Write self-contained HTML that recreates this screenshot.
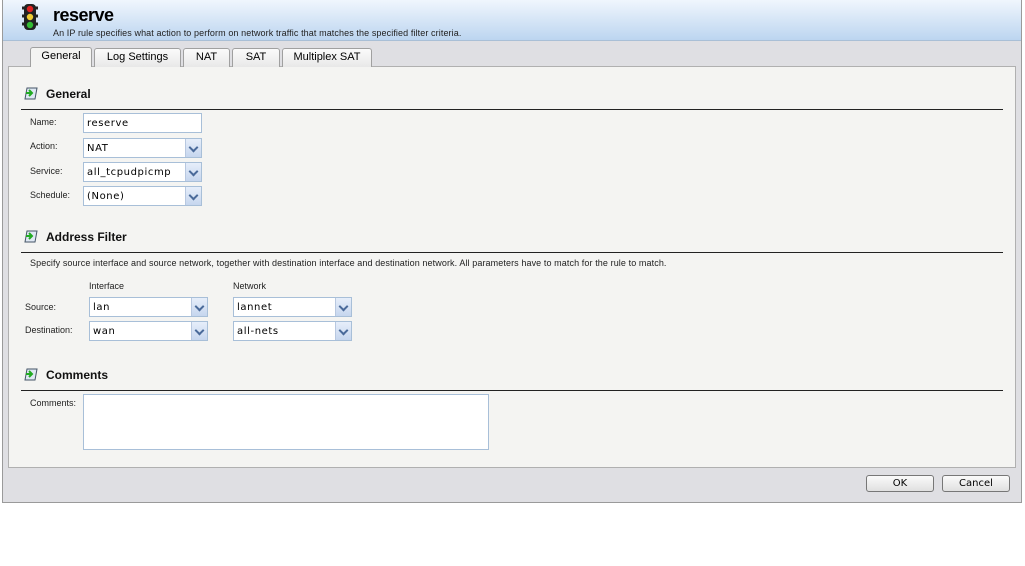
<!DOCTYPE html>
<html><head><style>
*{box-sizing:border-box;margin:0;padding:0}
body{width:1025px;height:566px;background:#fff;font-family:"Liberation Sans",Tahoma,sans-serif;position:relative;overflow:hidden}
.a{position:absolute}
.frame{left:2px;top:0;width:1020px;height:503px;background:#dfdfe3;border:1px solid #9a9a9a;border-top:none}
.hdr{left:3px;top:0;width:1018px;height:41px;background:linear-gradient(#f0f6fd,#bcd5f0);border-bottom:1px solid #a9bfd6}
.title{left:53px;top:5px;font-size:18px;font-weight:bold;color:#000;letter-spacing:-0.5px}
.sub{left:53px;top:28px;font-size:9px;color:#222;letter-spacing:0.1px}
.panel{left:8px;top:66px;width:1008px;height:402px;background:#f4f4f2;border:1px solid #b0b0b0}
.tab{top:48px;height:19px;border:1px solid #a0a0a0;border-bottom:none;background:linear-gradient(#fbfbfb,#e8e8e8);font-size:11px;text-align:center;line-height:17px;border-radius:3px 3px 0 0}
.tab.on{background:#f4f4f2;height:20px;top:47px;z-index:2}
.h{font-size:12px;font-weight:bold;color:#111}
.line{left:21px;width:982px;height:1px;background:#222}
.lbl{font-size:9px;color:#222}
.inp{height:20px;background:#fff;border:1px solid #a8bfd8;padding:4px 0 0 3px;letter-spacing:.6px;font-family:"DejaVu Sans","Liberation Sans",sans-serif;font-size:10px}
.dd{position:absolute;right:0;top:0;width:16px;height:18px;background:linear-gradient(#e6eefa,#c6d6ee);border-left:1px solid #b8c8e0}
.dd:after{content:"";position:absolute;left:4px;top:5px;width:5px;height:5px;border-right:2px solid #4a6a9a;border-bottom:2px solid #4a6a9a;transform:rotate(45deg)}
.btn{top:475px;height:17px;border:1px solid #777;border-radius:3px;background:linear-gradient(#fafafa,#e0e0e0);font-size:10px;text-align:center;line-height:15px;font-family:"DejaVu Sans",sans-serif}
.ic{width:15px;height:13px}
</style></head><body>
<div class="a frame"></div>
<div class="a hdr"></div>
<svg class="a" style="left:20px;top:2px" width="20" height="30" viewBox="0 0 20 30">
<rect x="4" y="2" width="12" height="26" rx="4" fill="#222"/>
<path d="M2 6h4M14 6h4M2 14h4M14 14h4M2 22h4M14 22h4" stroke="#222" stroke-width="3"/>
<circle cx="10" cy="7" r="3.2" fill="#d22"/><circle cx="10" cy="15" r="3.2" fill="#ec3"/><circle cx="10" cy="23" r="3.2" fill="#3b3"/>
</svg>
<div class="a title">reserve</div>
<div class="a sub">An IP rule specifies what action to perform on network traffic that matches the specified filter criteria.</div>
<div class="a panel"></div>
<div class="a tab on" style="left:30px;width:62px">General</div>
<div class="a tab" style="left:94px;width:87px">Log Settings</div>
<div class="a tab" style="left:183px;width:47px">NAT</div>
<div class="a tab" style="left:232px;width:48px">SAT</div>
<div class="a tab" style="left:282px;width:90px">Multiplex SAT</div>

<svg class="a ic" style="left:24px;top:87px" viewBox="0 0 15 13"><path d="M3 1h10l-2 11H1z" fill="#dfe8f4" stroke="#456" /><path d="M2 6h5M5 3l3 3-3 3" stroke="#2a2" stroke-width="2" fill="none"/></svg>
<div class="a h" style="left:46px;top:87px">General</div>
<div class="a line" style="top:109px"></div>
<div class="a lbl" style="left:30px;top:117px">Name:</div>
<div class="a inp" style="left:83px;top:113px;width:119px">reserve</div>
<div class="a lbl" style="left:30px;top:141px">Action:</div>
<div class="a inp" style="left:83px;top:138px;width:119px">NAT<span class="dd"></span></div>
<div class="a lbl" style="left:30px;top:166px">Service:</div>
<div class="a inp" style="left:83px;top:162px;width:119px">all_tcpudpicmp<span class="dd"></span></div>
<div class="a lbl" style="left:30px;top:190px">Schedule:</div>
<div class="a inp" style="left:83px;top:186px;width:119px">(None)<span class="dd"></span></div>

<svg class="a ic" style="left:24px;top:230px" viewBox="0 0 15 13"><path d="M3 1h10l-2 11H1z" fill="#dfe8f4" stroke="#456" /><path d="M2 6h5M5 3l3 3-3 3" stroke="#2a2" stroke-width="2" fill="none"/></svg>
<div class="a h" style="left:46px;top:230px">Address Filter</div>
<div class="a line" style="top:252px"></div>
<div class="a lbl" style="left:30px;top:258px;letter-spacing:0.1px">Specify source interface and source network, together with destination interface and destination network. All parameters have to match for the rule to match.</div>
<div class="a lbl" style="left:89px;top:281px">Interface</div>
<div class="a lbl" style="left:233px;top:281px">Network</div>
<div class="a lbl" style="left:25px;top:302px">Source:</div>
<div class="a inp" style="left:89px;top:297px;width:119px">lan<span class="dd"></span></div>
<div class="a inp" style="left:233px;top:297px;width:119px">lannet<span class="dd"></span></div>
<div class="a lbl" style="left:25px;top:325px">Destination:</div>
<div class="a inp" style="left:89px;top:321px;width:119px">wan<span class="dd"></span></div>
<div class="a inp" style="left:233px;top:321px;width:119px">all-nets<span class="dd"></span></div>

<svg class="a ic" style="left:24px;top:368px" viewBox="0 0 15 13"><path d="M3 1h10l-2 11H1z" fill="#dfe8f4" stroke="#456" /><path d="M2 6h5M5 3l3 3-3 3" stroke="#2a2" stroke-width="2" fill="none"/></svg>
<div class="a h" style="left:46px;top:368px">Comments</div>
<div class="a line" style="top:390px"></div>
<div class="a lbl" style="left:30px;top:398px">Comments:</div>
<div class="a" style="left:83px;top:394px;width:406px;height:56px;background:#fff;border:1px solid #a8bfd8"></div>

<div class="a btn" style="left:866px;width:68px">OK</div>
<div class="a btn" style="left:942px;width:68px">Cancel</div>
</body></html>
